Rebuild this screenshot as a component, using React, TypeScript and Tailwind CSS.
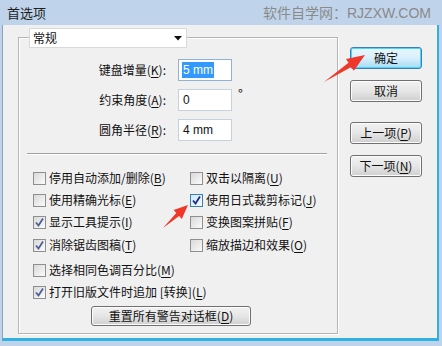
import React from "react";

const cjk = { fontFamily: '"Noto Sans CJK SC", "Liberation Sans", sans-serif' };

function Mn({ k }: { k: string }) {
  return (
    <span>
      (<u className="underline-offset-2">{k}</u>)
    </span>
  );
}

function Box({ checked, focus }: { checked?: boolean; focus?: boolean }) {
  return (
    <span
      className={
        "flex h-[13px] w-[13px] shrink-0 items-center justify-center border " +
        (focus
          ? "border-[#3c7fb1] bg-gradient-to-br from-[#cfe7fa] to-[#f4fafe]"
          : "border-[#8f8f8f] bg-gradient-to-br from-[#d9d9d9] to-[#fbfbfb]")
      }
    >
      {checked && (
        <svg width="11" height="11" viewBox="0 0 11 11">
          <path
            d="M2 5.5 L4.5 8.5 L9 1.5"
            fill="none"
            stroke={focus ? "#1b2b84" : "#4c5f97"}
            strokeWidth="1.8"
          />
        </svg>
      )}
    </span>
  );
}

function Check({ label, k, checked, focus }: { label: string; k: string; checked?: boolean; focus?: boolean }) {
  return (
    <div className="flex h-[22px] items-center gap-[3px] whitespace-nowrap">
      <Box checked={checked} focus={focus} />
      <span>
        {label}
        <Mn k={k} />
      </span>
    </div>
  );
}

function Btn({ children, primary }: { children: React.ReactNode; primary?: boolean }) {
  return (
    <div
      className={
        "flex h-[22px] w-[72px] items-center justify-center rounded-[3px] border " +
        (primary
          ? "border-[#3c7fb1] bg-gradient-to-b from-[#eaf6fd] via-[#d9f0fc] to-[#a7d9f5] shadow-[inset_0_0_0_1px_#48d7fa]"
          : "border-[#707070] bg-gradient-to-b from-[#f2f2f2] via-[#e6e6e6] to-[#cfcfcf] shadow-[inset_0_0_0_1px_#fcfcfc]")
      }
    >
      {children}
    </div>
  );
}

function Field({ label, k, value, selected, suffix }: { label: string; k: string; value: string; selected?: boolean; suffix?: boolean }) {
  return (
    <div className="flex h-[22px] items-center">
      <div className="w-[147px] text-right">
        {label}
        <Mn k={k} />:
      </div>
      <div
        className={
          "ml-[12px] flex h-[22px] w-[54px] items-center border bg-white px-[3px] " +
          (selected ? "border-[#8fb4d3]" : "border-[#c5d2de]")
        }
        style={{ fontFamily: '"Liberation Sans", sans-serif' }}
      >
        <span className={selected ? "bg-[#3399ff] px-[1px] leading-[16px] text-white" : "px-[1px]"}>{value}</span>
      </div>
      {suffix && <span className="ml-[6px] -mt-[12px] text-[13px]">°</span>}
    </div>
  );
}

export default function App() {
  return (
    <div className="relative h-[346px] w-[442px] overflow-hidden bg-[#bfd4ea] text-[12px] text-[#111]" style={cjk}>
      {/* title bar */}
      <div className="flex h-[25px] items-center justify-between pl-[7px] pr-[11px]">
        <span className="text-[13px] text-[#1e1e1e]">首选项</span>
        <span className="text-[14px] text-[#8a8a8a]">
          软件自学网：<span style={{ fontFamily: '"Liberation Sans", sans-serif' }}>RJZXW.COM</span>
        </span>
      </div>

      {/* body */}
      <div className="ml-[2px] mr-[3px] flex h-[316px] border-b-[3px] border-l border-r-[2px] border-[#2fb1e3] border-l-[#8aa2ba] bg-[#f0f0f0] pl-[15px] pt-[12px]">
        {/* group box */}
        <div className="relative h-[297px] w-[320px] border border-[#b5b5b5] shadow-[inset_1px_1px_0_#fff,1px_1px_0_#fff]">
          <div className="absolute left-[10px] top-[-10px] flex h-[20px] w-[158px] items-center justify-between border border-[#d9d9d9] bg-white pl-[3px] pr-[4px]">
            <span>常规</span>
            <svg width="8" height="5" viewBox="0 0 8 5">
              <path d="M0 0 H8 L4 4.5 Z" fill="#111" />
            </svg>
          </div>

          <div className="flex flex-col gap-[8px] pt-[21px]">
            <Field label="键盘增量" k="K" value="5 mm" selected />
            <Field label="约束角度" k="A" value="0" suffix />
            <Field label="圆角半径" k="R" value="4 mm" />
          </div>

          <div className="ml-[8px] mr-[10px] mt-[12px] h-px bg-[#a0a0a0] shadow-[0_1px_0_#fff]" />

          <div className="ml-[14px] mt-[13px] grid grid-cols-[157px_1fr]">
            <Check label="停用自动添加/删除" k="B" />
            <Check label="双击以隔离" k="U" />
            <Check label="使用精确光标" k="E" />
            <Check label="使用日式裁剪标记" k="J" checked focus />
            <Check label="显示工具提示" k="I" checked />
            <Check label="变换图案拼贴" k="F" />
            <div className="mt-px">
              <Check label="消除锯齿图稿" k="T" checked />
            </div>
            <div className="mt-px">
              <Check label="缩放描边和效果" k="O" />
            </div>
          </div>
          <div className="ml-[14px] mt-[3px] flex flex-col">
            <Check label="选择相同色调百分比" k="M" />
            <div className="flex h-[22px] items-center gap-[3px] whitespace-nowrap">
              <Box checked />
              <span>
                打开旧版文件时追加 [转换]
                <Mn k="L" />
              </span>
            </div>
          </div>
          <div className="ml-[72px] mt-[3px] flex h-[20px] w-[160px] items-center justify-center rounded-[3px] border border-[#707070] bg-gradient-to-b from-[#f2f2f2] via-[#e6e6e6] to-[#cfcfcf] shadow-[inset_0_0_0_1px_#fcfcfc]">
            重置所有警告对话框
            <Mn k="D" />
          </div>
        </div>

        {/* right buttons */}
        <div className="ml-[12px] flex flex-col pt-[10px]">
          <Btn primary>确定</Btn>
          <div className="mt-[11px]">
            <Btn>取消</Btn>
          </div>
          <div className="mt-[20px]">
            <Btn>
              上一项<Mn k="P" />
            </Btn>
          </div>
          <div className="mt-[11px]">
            <Btn>
              下一项<Mn k="N" />
            </Btn>
          </div>
        </div>
      </div>

      {/* red annotation arrows */}
      <svg className="pointer-events-none absolute left-0 top-0" width="442" height="346">
        <polygon points="324,82 348.5,62.8 346,59 365,55 353.8,70.8 351.3,67" fill="#f0382a" />
        <polygon points="163,228 176.3,213 173.6,210.1 188,205 181.8,218.9 179.1,216" fill="#f0382a" />
      </svg>
    </div>
  );
}
